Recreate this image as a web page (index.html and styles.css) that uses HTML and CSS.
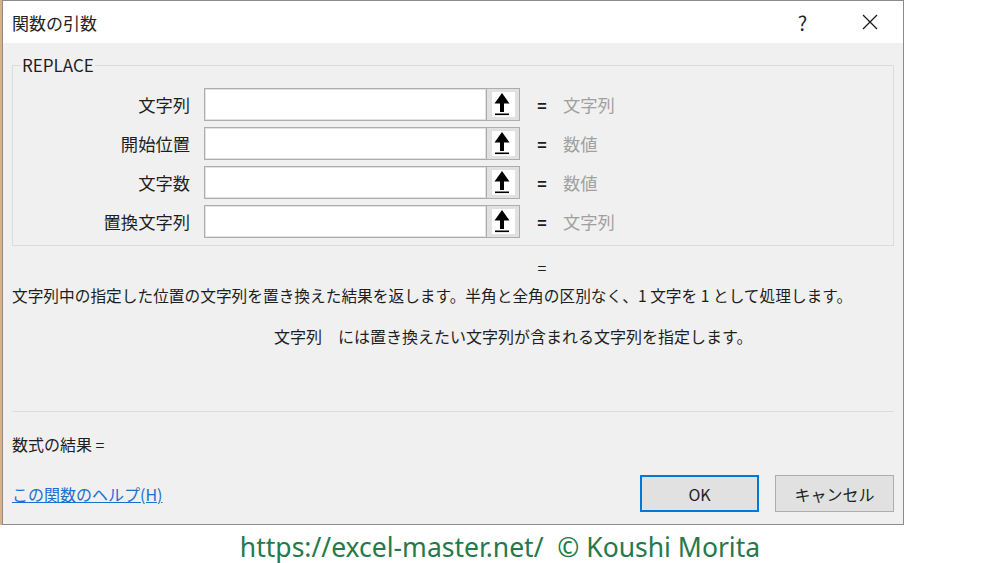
FILE: index.html
```html
<!DOCTYPE html>
<html lang="ja">
  <head>
    <meta charset="UTF-8" />
    <meta name="viewport" content="width=device-width, initial-scale=1.0" />
    <title>関数の引数</title>
    <link rel="stylesheet" href="styles.css">
  </head>
  <body>
    <div class="screen">
      <div class="dialog">
        <div class="titlebar">
          <div class="title">関数の引数</div>
          <div class="title-btns">
            <div class="title-btn">?</div>
            <div class="title-btn">
              <svg width="16" height="16" viewBox="0 0 16 16">
                <path d="M1 1 L15 15 M15 1 L1 15" stroke="#1a1a1a" stroke-width="1.3" fill="none" />
              </svg>
            </div>
          </div>
        </div>

        <div class="content">
          <fieldset class="group">
            <legend>REPLACE</legend>

            <div class="arg-row">
              <label>文字列</label>
              <input type="text" />
              <div class="ref-btn">
                <svg width="23" height="25" viewBox="0 0 23 25">
                  <rect width="23" height="25" fill="#fff" />
                  <path d="M10 1 L17.5 11.5 L12 11.5 L12 20 L8 20 L8 11.5 L2.5 11.5 Z" fill="#000" />
                  <rect x="3" y="21.5" width="14" height="1.6" fill="#000" />
                </svg>
              </div>
              <span class="eq">=</span>
              <span class="arg-val">文字列</span>
            </div>

            <div class="arg-row">
              <label>開始位置</label>
              <input type="text" />
              <div class="ref-btn">
                <svg width="23" height="25" viewBox="0 0 23 25">
                  <rect width="23" height="25" fill="#fff" />
                  <path d="M10 1 L17.5 11.5 L12 11.5 L12 20 L8 20 L8 11.5 L2.5 11.5 Z" fill="#000" />
                  <rect x="3" y="21.5" width="14" height="1.6" fill="#000" />
                </svg>
              </div>
              <span class="eq">=</span>
              <span class="arg-val">数値</span>
            </div>

            <div class="arg-row">
              <label>文字数</label>
              <input type="text" />
              <div class="ref-btn">
                <svg width="23" height="25" viewBox="0 0 23 25">
                  <rect width="23" height="25" fill="#fff" />
                  <path d="M10 1 L17.5 11.5 L12 11.5 L12 20 L8 20 L8 11.5 L2.5 11.5 Z" fill="#000" />
                  <rect x="3" y="21.5" width="14" height="1.6" fill="#000" />
                </svg>
              </div>
              <span class="eq">=</span>
              <span class="arg-val">数値</span>
            </div>

            <div class="arg-row">
              <label>置換文字列</label>
              <input type="text" />
              <div class="ref-btn">
                <svg width="23" height="25" viewBox="0 0 23 25">
                  <rect width="23" height="25" fill="#fff" />
                  <path d="M10 1 L17.5 11.5 L12 11.5 L12 20 L8 20 L8 11.5 L2.5 11.5 Z" fill="#000" />
                  <rect x="3" y="21.5" width="14" height="1.6" fill="#000" />
                </svg>
              </div>
              <span class="eq">=</span>
              <span class="arg-val">文字列</span>
            </div>
          </fieldset>

          <div class="result-eq">=</div>
          <p class="desc">文字列中の指定した位置の文字列を置き換えた結果を返します。半角と全角の区別なく、1 文字を 1 として処理します。</p>
          <p class="arg-desc"><span class="arg-name">文字列</span>には置き換えたい文字列が含まれる文字列を指定します。</p>

          <div class="sep"></div>

          <div class="formula-result">数式の結果 =</div>

          <div class="footer">
            <a href="#" class="help-link">この関数のヘルプ(H)</a>
            <div class="btns">
              <button class="btn btn-ok">OK</button>
              <button class="btn">キャンセル</button>
            </div>
          </div>
        </div>
      </div>
    </div>

    <div class="credit">https://excel-master.net/&nbsp; © Koushi Morita</div>
  </body>
</html>
```

FILE: styles.css
```css
body {
  margin: 0;
  background: #fff;
  font-family: "Noto Sans CJK JP", "Noto Sans", sans-serif;
  font-size: 16px;
  color: #1e1e1e;
}
.screen {
  padding-left: 2px;
  background: #d8b18a;
  width: 902px;
}
.dialog {
  width: 902px;
  height: 525px;
  box-sizing: border-box;
  border: 1px solid #8c8c8c;
  display: flex;
  flex-direction: column;
  background: #f0f0f0;
}
.titlebar {
  height: 42px;
  background: #fff;
  display: flex;
  align-items: center;
  justify-content: space-between;
}
.title {
  padding-left: 9px;
  font-size: 17px;
  color: #222;
}
.title-btns {
  display: flex;
  height: 100%;
}
.title-btn {
  width: 67px;
  display: flex;
  align-items: center;
  justify-content: center;
  font-size: 20px;
  color: #222;
}
.content {
  flex: 1;
  padding: 0 9px 0 9px;
  display: flex;
  flex-direction: column;
}
.group {
  margin: 12px 0 0 0;
  padding: 13px 0 7px 0;
  border: 1px solid #dcdcdc;
  display: flex;
  flex-direction: column;
  gap: 6px;
}
.group legend {
  margin-left: 8px;
  padding: 0 1px;
  line-height: 20px;
  font-size: 17px;
  color: #1e1e1e;
}
.arg-row {
  display: flex;
  align-items: center;
  height: 33px;
  font-size: 17.3px;
}
.arg-row label {
  width: 177px;
  text-align: right;
  color: #1e1e1e;
}
.arg-row input {
  margin-left: 14px;
  width: 283px;
  height: 33px;
  box-sizing: border-box;
  border: 1px solid #adadad;
  box-shadow: inset 0 0 0 1px #e2e2e2;
  background: #fff;
  outline: none;
}
.ref-btn {
  width: 33px;
  height: 33px;
  box-sizing: border-box;
  border: 1px solid #adadad;
  border-left: none;
  background: #e1e1e1;
  display: flex;
  align-items: center;
  justify-content: center;
}
.ref-btn svg {
  display: block;
}
.eq {
  width: 10px;
  margin-left: 17px;
  text-align: center;
  font-size: 16px;
  font-weight: bold;
  color: #1e1e1e;
}
.arg-val {
  margin-left: 16px;
  color: #a0a0a0;
}
.result-eq {
  margin: 11px 0 0 525px;
  width: 10px;
  text-align: center;
  line-height: 20px;
}
.desc {
  margin: 9px 0 0 0;
  line-height: 20px;
  font-size: 15.7px;
}
.arg-desc {
  margin: 20px 0 0 0;
  padding-left: 262px;
  line-height: 20px;
}
.arg-name {
  margin-right: 16px;
}
.sep {
  margin-top: 65px;
  height: 1px;
  background: #dcdcdc;
}
.formula-result {
  margin-top: 22px;
  line-height: 20px;
}
.footer {
  margin-top: 21px;
  display: flex;
  align-items: center;
  justify-content: space-between;
}
.help-link {
  color: #1a6fd0;
  text-decoration: underline;
}
.btns {
  display: flex;
  gap: 16px;
}
.btn {
  width: 119px;
  height: 37px;
  font-family: inherit;
  font-size: 16px;
  color: #1e1e1e;
  background: #e1e1e1;
  border: 1px solid #adadad;
  padding: 0;
}
.btn-ok {
  border: 2px solid #0078d7;
}
.credit {
  margin-top: 6px;
  width: 1000px;
  text-align: center;
  line-height: 32px;
  font-family: "Noto Sans", sans-serif;
  font-size: 26.5px;
  color: #25794a;
}
```
